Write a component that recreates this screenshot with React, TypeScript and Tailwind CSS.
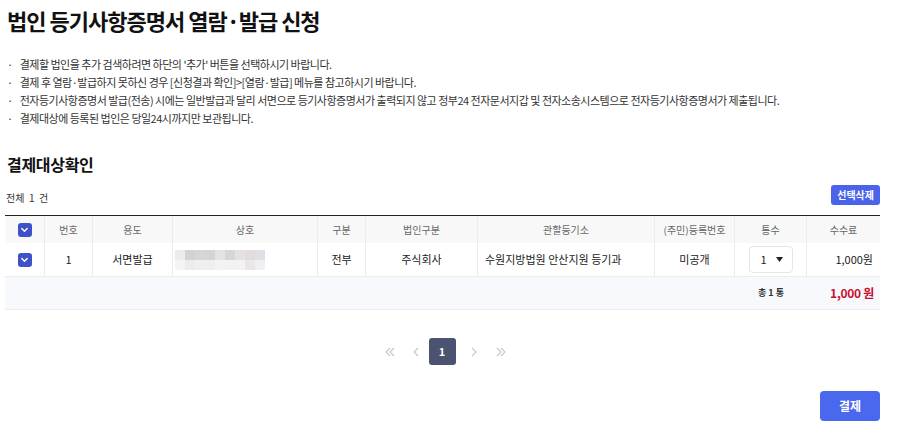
import React from "react";

const font = { fontFamily: '"Noto Sans CJK KR", "Noto Sans", sans-serif' };

function Check() {
  return (
    <span className="inline-flex items-center justify-center w-[14px] h-[14px] rounded-[3px] bg-[#3f51c8]">
      <svg width="9" height="9" viewBox="0 0 10 10" fill="none">
        <path d="M2 4l3 3 3-3" stroke="#fff" strokeWidth="1.6" strokeLinecap="round" strokeLinejoin="round" />
      </svg>
    </span>
  );
}

function Chevron({ dir, double }: { dir: "l" | "r"; double?: boolean }) {
  const one = dir === "l" ? "M6 1L2 5l4 4" : "M2 1l4 4-4 4";
  const two = dir === "l" ? "M10 1L6 5l4 4" : "M6 1l4 4-4 4";
  return (
    <svg width={double ? 12 : 8} height="10" viewBox={double ? "0 0 12 10" : "0 0 8 10"} fill="none">
      <path d={one} stroke="#c6c6c6" strokeWidth="1.1" />
      {double && <path d={two} stroke="#c6c6c6" strokeWidth="1.1" />}
    </svg>
  );
}

const cols = ["w-[40px]", "w-[48px]", "w-[80px]", "w-[145px]", "w-[48px]", "w-[112px]", "w-[177px]", "w-[80px]", "w-[72px]", "w-[73px]"];

const blur = [
  ["#ececec", "#d2d2d2", "#d5d6d8", "#d4d4d4", "#e3e3e5", "#d7d5d6", "#e1e2e1", "#e4dcdc", "#dde1e5"],
  ["#f4f4f4", "#ececec", "#eeefef", "#efefed", "#f3f3f2", "#f2f2f1", "#f3f3f3", "#ebe6e8", "#eef0f1"],
];

export default function App() {
  const notices = [
    "결제할 법인을 추가 검색하려면 하단의 '추가' 버튼을 선택하시기 바랍니다.",
    "결제 후 열람·발급하지 못하신 경우 [신청결과 확인]>[열람·발급] 메뉴를 참고하시기 바랍니다.",
    "전자등기사항증명서 발급(전송) 시에는 일반발급과 달리 서면으로 등기사항증명서가 출력되지 않고 정부24 전자문서지갑 및 전자소송시스템으로 전자등기사항증명서가 제출됩니다.",
    "결제대상에 등록된 법인은 당일24시까지만 보관됩니다.",
  ];
  const headers = ["", "번호", "용도", "상호", "구분", "법인구분", "관할등기소", "(주민)등록번호", "통수", "수수료"];

  return (
    <div className="w-[900px] h-[438px] bg-white overflow-hidden text-[#222]" style={font}>
      <div className="pl-[7px] pr-[20px] pt-[4px]">
        <h1 className="text-[22px] font-bold leading-[32px] tracking-[-1px] text-[#111]">
          법인 등기사항증명서 열람·발급 신청
        </h1>

        <ul className="mt-[19px] flex flex-col text-[11px] leading-[18px] text-[#333] tracking-[-0.5px]">
          {notices.map((n) => (
            <li key={n} className="flex gap-[7px]">
              <span>·</span>
              <span>{n}</span>
            </li>
          ))}
        </ul>

        <h2 className="mt-[25px] text-[16px] font-bold leading-[24px] tracking-[-0.3px] text-[#111]">결제대상확인</h2>
      </div>

      <div className="ml-[5px] w-[875px]">
        <div className="flex items-end justify-between mt-[9px] pb-[10px]">
          <span className="text-[10px] leading-[12px] text-[#333] pl-[1px] pb-[1px]">전체&nbsp; 1&nbsp; 건</span>
          <button className="h-[20px] px-[6px] rounded-[3px] bg-[#4a63ea] text-white text-[10px] font-bold leading-[20px]">
            선택삭제
          </button>
        </div>

        <div className="border-t-[1.5px] border-[#222]">
          <div className="flex h-[27px] bg-[#f8f8f8] text-[10px] text-[#666]">
            {headers.map((h, i) => (
              <div key={i} className={`${cols[i]} flex items-center justify-center ${i < 9 ? "border-r border-[#ececec]" : ""}`}>
                {i === 0 ? <Check /> : h}
              </div>
            ))}
          </div>

          <div className="flex h-[34px] text-[11px] text-[#222] border-b border-[#ececec]">
            <div className={`${cols[0]} flex items-center justify-center border-r border-[#ececec]`}>
              <Check />
            </div>
            <div className={`${cols[1]} flex items-center justify-center border-r border-[#ececec]`}>1</div>
            <div className={`${cols[2]} flex items-center justify-center border-r border-[#ececec]`}>서면발급</div>
            <div className={`${cols[3]} flex items-center pl-[2px] border-r border-[#ececec]`}>
              <div className="flex flex-col">
                {blur.map((row, r) => (
                  <div key={r} className="flex">
                    {row.map((c, k) => (
                      <div key={k} className="w-[10px] h-[10px]" style={{ backgroundColor: c }} />
                    ))}
                  </div>
                ))}
              </div>
            </div>
            <div className={`${cols[4]} flex items-center justify-center border-r border-[#ececec]`}>전부</div>
            <div className={`${cols[5]} flex items-center justify-center border-r border-[#ececec]`}>주식회사</div>
            <div className={`${cols[6]} flex items-center pl-[7px] border-r border-[#ececec]`}>수원지방법원 안산지원 등기과</div>
            <div className={`${cols[7]} flex items-center justify-center border-r border-[#ececec]`}>미공개</div>
            <div className={`${cols[8]} flex items-center justify-center border-r border-[#ececec]`}>
              <div className="w-[44px] h-[27px] border border-[#e6e6e6] rounded-[4px] flex items-center justify-between pl-[11px] pr-[9px]">
                <span>1</span>
                <svg width="7" height="5" viewBox="0 0 7 5"><path d="M0 0h7L3.5 5z" fill="#222" /></svg>
              </div>
            </div>
            <div className={`${cols[9]} flex items-center justify-end pr-[7px]`}>1,000원</div>
          </div>

          <div className="flex items-center justify-end h-[33px] bg-[#f8f9fd] border-b border-[#ececec]">
            <div className="w-[72px] text-center text-[9px] font-bold text-[#333]">총 1 통</div>
            <div className="w-[73px] text-right pr-[6px] text-[12px] font-bold tracking-[-0.3px] text-[#c8102e]">1,000 원</div>
          </div>
        </div>

        <div className="flex items-center justify-center mt-[28px]">
          <span className="w-[26px] flex justify-center"><Chevron dir="l" double /></span>
          <span className="w-[26px] flex justify-center"><Chevron dir="l" /></span>
          <span className="w-[27px] h-[27px] rounded-[3px] bg-[#4b5370] text-white text-[11px] font-bold flex items-center justify-center">1</span>
          <span className="w-[37px] flex justify-center"><Chevron dir="r" /></span>
          <span className="w-[16px] flex justify-center"><Chevron dir="r" double /></span>
        </div>

        <div className="flex justify-end mt-[26px]">
          <button className="w-[60px] h-[30px] rounded-[4px] bg-[#4a68ee] text-white text-[12px] font-bold">결제</button>
        </div>
      </div>
    </div>
  );
}
